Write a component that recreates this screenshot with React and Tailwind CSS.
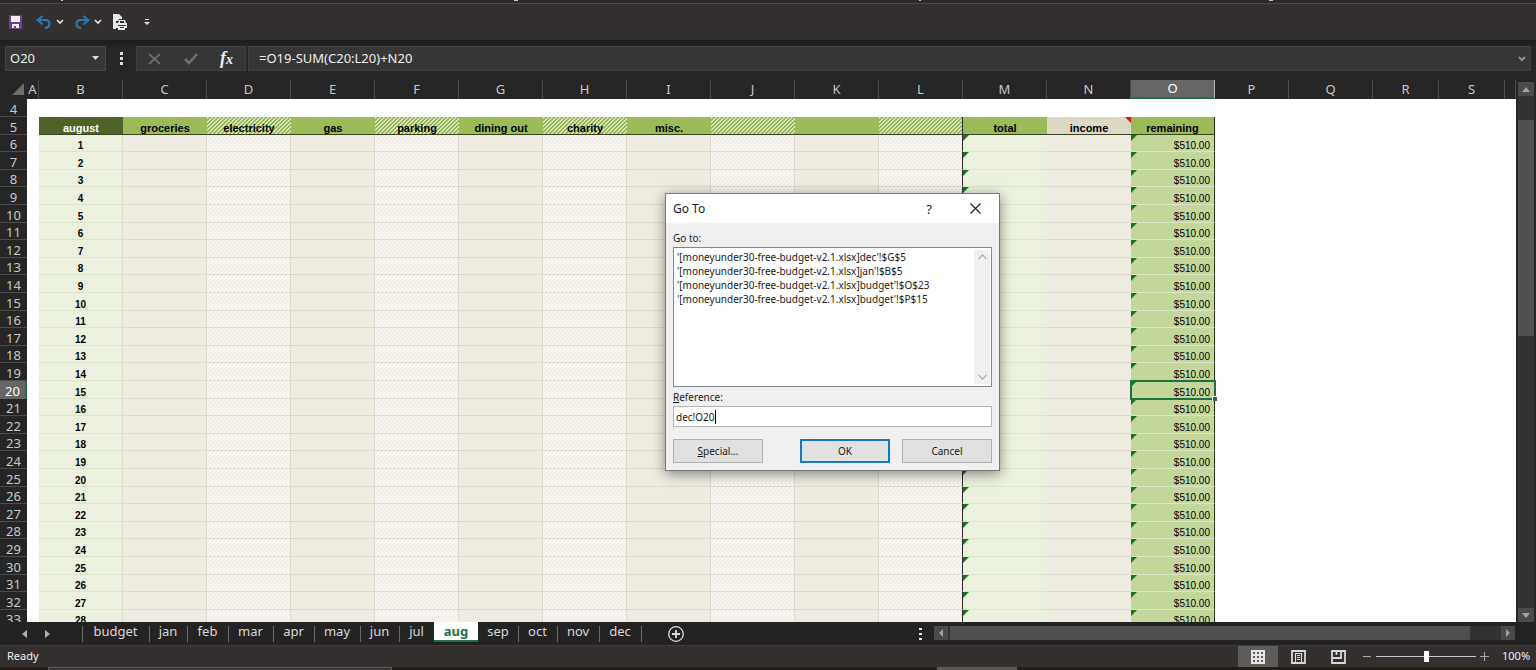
import React from "react";

const MONTHS = ["budget", "jan", "feb", "mar", "apr", "may", "jun", "jul", "aug", "sep", "oct", "nov", "dec"];

const TAB_WIDTHS = {
  budget: "w-[67px]",
  jan: "w-[38px]",
  feb: "w-[41px]",
  mar: "w-[45px]",
  apr: "w-[41px]",
  may: "w-[46px]",
  jun: "w-[39px]",
  jul: "w-[35px]",
  aug: "w-[44px]",
  sep: "w-[40px]",
  oct: "w-[39px]",
  nov: "w-[42px]",
  dec: "w-[42px]",
};

const PLAIN = "bg-[#eeebe0]";
const HATCH =
  "bg-[linear-gradient(135deg,#faf9f5_0_25%,#efece3_25%_50%,#faf9f5_50%_75%,#efece3_75%)] bg-[length:4px_4px]";
const HEAD = "bg-[#9bbb59]";
const HEAD_HATCH =
  "bg-[linear-gradient(135deg,#d9e5bf_0_25%,#93b54c_25%_50%,#d9e5bf_50%_75%,#93b54c_75%)] bg-[length:4px_4px]";

const COLUMNS = [
  { id: "A", width: "w-[12px]" },
  { id: "B", width: "w-[84px]", title: "august", head: "bg-[#4f6228] text-white", body: "bg-[#ebf1de]" },
  { id: "C", width: "w-[84px]", title: "groceries", head: HEAD, body: PLAIN },
  { id: "D", width: "w-[84px]", title: "electricity", head: HEAD_HATCH, body: HATCH },
  { id: "E", width: "w-[84px]", title: "gas", head: HEAD, body: PLAIN },
  { id: "F", width: "w-[84px]", title: "parking", head: HEAD_HATCH, body: HATCH },
  { id: "G", width: "w-[84px]", title: "dining out", head: HEAD, body: PLAIN },
  { id: "H", width: "w-[84px]", title: "charity", head: HEAD_HATCH, body: HATCH },
  { id: "I", width: "w-[84px]", title: "misc.", head: HEAD, body: PLAIN },
  { id: "J", width: "w-[84px]", title: "", head: HEAD_HATCH, body: HATCH },
  { id: "K", width: "w-[84px]", title: "", head: HEAD, body: PLAIN },
  { id: "L", width: "w-[84px]", title: "", head: HEAD_HATCH, body: HATCH },
  { id: "M", width: "w-[84px]", title: "total", head: HEAD, body: "bg-[#ebf1de]" },
  { id: "N", width: "w-[84px]", title: "income", head: "bg-[#ddd9c4]", body: PLAIN },
  { id: "O", width: "w-[84px]", title: "remaining", head: HEAD, body: "bg-[#c4d79b]" },
  { id: "P", width: "w-[74px]" },
  { id: "Q", width: "w-[84px]" },
  { id: "R", width: "w-[66px]" },
  { id: "S", width: "w-[66px]" },
  { id: "", width: "w-auto" },
];

const ROWS = Array.from({ length: 30 }, (_, i) => i + 4);
const ROW_HEIGHTS = ["h-[17px]", "h-[18px]", "h-[17px]", "h-[18px]", "h-[18px]"];
const rowHeight = (row) => (row < 6 ? "h-[18px]" : ROW_HEIGHTS[(row - 6) % 5]);

function ErrorMark() {
  return (
    <svg className="absolute top-0 left-0" width="6" height="6" aria-hidden="true">
      <path d="M0 0H6L0 6Z" fill="#107c10" />
    </svg>
  );
}

function Cell({ row, col }) {
  if (!col.body || row === 4) return <td className="bg-white" />;
  const edge =
    col.id === "O" ? "border-r border-r-[#2b3318]" : col.id === "L" ? "border-r border-r-[#2b2b2b]" : "";
  if (row === 5) {
    return (
      <td className={`relative border-b border-b-[#3a4420] text-center font-bold ${edge} ${col.head}`}>
        <div className="flex h-[17px] items-end justify-center leading-[11px]">{col.title}</div>
        {col.id === "N" && (
          <svg className="absolute top-0 right-0" width="6" height="6" aria-hidden="true">
            <path d="M0 0H6V6Z" fill="#d21414" />
          </svg>
        )}
      </td>
    );
  }
  const line =
    col.id === "B" || col.id === "M" || col.id === "O"
      ? "border-b border-b-[#dbe3c9]"
      : "border-b border-b-[#dcd9cf]";
  const side = edge || (col.id === "M" || col.id === "N" ? "" : "border-r border-r-[#dcd9cf]");
  return (
    <td className={`relative text-[10px] ${line} ${side} ${col.body}`}>
      {col.id === "B" && <div className="h-4 text-center leading-[21px] font-bold">{row - 5}</div>}
      {col.id === "O" && <div className="h-4 pr-1 text-right leading-[21px]">$510.00</div>}
      {(col.id === "M" || col.id === "O") && <ErrorMark />}
      {col.id === "O" && row === 20 && (
        <div className="absolute -top-px -right-[2px] -bottom-[2px] -left-px z-10 border-2 border-[#1e7145]">
          <div className="absolute -right-[3px] -bottom-[3px] size-[5px] border-t border-l border-white bg-[#1e7145]" />
        </div>
      )}
    </td>
  );
}

function Sheet() {
  return (
    <table className="w-full table-fixed border-separate border-spacing-0 font-['Liberation_Sans',sans-serif] text-[11px] text-black">
      <colgroup>
        <col className="w-[27px]" />
        {COLUMNS.map((c, i) => (
          <col key={i} className={c.width} />
        ))}
      </colgroup>
      <thead>
        <tr className="h-[19px] bg-[#262626] font-['Noto_Sans',sans-serif] text-[13px] leading-[17px] text-[#c8c8c8]">
          <th className="p-0">
            <svg className="ml-3" width="13" height="13" aria-label="Select all">
              <path d="M12 0V12H0Z" fill="#6e6e6e" />
            </svg>
          </th>
          {COLUMNS.map((c, i) => (
            <th
              key={i}
              className={
                c.id === "O"
                  ? "border-r border-b-2 border-r-[#bdbdbd] border-b-[#1e7145] bg-[#666666] p-0 font-normal text-white"
                  : "border-r border-r-[#4c4c4c] p-0 font-normal"
              }
            >
              {c.id}
            </th>
          ))}
        </tr>
      </thead>
      <tbody>
        {ROWS.map((row) => (
          <tr key={row} className={rowHeight(row)}>
            <th
              className={
                row === 20
                  ? "border-r-2 border-r-[#1e7145] bg-[#666666] p-0 font-['Noto_Sans',sans-serif] text-[13px] font-normal text-white"
                  : "border-b border-b-[#4c4c4c] bg-[#262626] p-0 font-['Noto_Sans',sans-serif] text-[13px] font-normal text-[#c8c8c8]"
              }
            >
              <div className="h-4 leading-[19px]">{row}</div>
            </th>
            {COLUMNS.map((c, i) => (
              <Cell key={i} row={row} col={c} />
            ))}
          </tr>
        ))}
      </tbody>
    </table>
  );
}

function Chevron() {
  return (
    <svg width="8" height="6" viewBox="0 0 8 6" fill="none" stroke="#e6e6e6" strokeWidth="1.600">
      <path d="M1 1 4 4 7 1" />
    </svg>
  );
}

function QuickAccess() {
  return (
    <header className="flex h-[37px] shrink-0 items-center border-t border-[#4a4a48] bg-[#34302f] pl-2">
      <button aria-label="Save" className="w-7">
        <svg width="14" height="14" viewBox="0 0 14 14">
          <path d="M1 0H14V14H2L1 13Z" fill="#6b3f96" />
          <path d="M3 1H12V7H3Z" fill="#f5f0fa" />
          <path d="M4 9H11V13H4Z" fill="#f5f0fa" />
          <path d="M6 11H8V13H6Z" fill="#6b3f96" />
        </svg>
      </button>
      <button aria-label="Undo" className="flex w-[38px] items-center gap-1">
        <svg width="16" height="14" viewBox="0 0 16 14" fill="none" stroke="#2e75b6" strokeWidth="2.200">
          <path d="M6.500 1 1.800 5 6.500 9.500" />
          <path d="M2 5H9C15 5 15 12 9 13" />
        </svg>
        <Chevron />
      </button>
      <button aria-label="Redo" className="flex w-[38px] items-center gap-1">
        <svg width="16" height="14" viewBox="0 0 16 14" fill="none" stroke="#2e75b6" strokeWidth="2.200">
          <path d="M9.500 1 14.200 5 9.500 9.500" />
          <path d="M14 5H7C1 5 1 12 7 13" />
        </svg>
        <Chevron />
      </button>
      <button aria-label="Print preview" className="w-8">
        <svg width="17" height="17" viewBox="0 0 17 17">
          <path d="M1 0H7L10 3V5H7L6 7H4V15H1Z" fill="#e8e8e8" />
          <path d="M7 6H13L14 9H15V14H13V16H6V14H4V9H6Z" fill="#e8e8e8" />
          <path d="M8 7H12V9H8ZM6 11H14V12H6ZM8 13H12V14H8Z" fill="#34302f" />
        </svg>
      </button>
      <button aria-label="Customize toolbar">
        <svg width="6" height="7" viewBox="0 0 6 7" fill="#dcdcdc">
          <path d="M1 0H5V1H1ZM0 3H6L3 6Z" />
        </svg>
      </button>
    </header>
  );
}

function FormulaBar() {
  return (
    <section className="flex h-[40px] shrink-0 items-start bg-gradient-to-b from-[#1c1c1c] to-[#262626] to-20% pt-[6px] pr-[5px] pl-[5px] text-[13px] text-[#efefef]">
      <label className="flex h-[25px] w-[101px] items-center border border-[#444] bg-[#363636] pr-[6px]">
        <input aria-label="Name box" defaultValue="O20" className="w-0 flex-1 bg-transparent pl-1 outline-none" />
        <svg width="7" height="5" viewBox="0 0 7 5" fill="#dcdcdc">
          <path d="M0 0H7L3.500 4Z" />
        </svg>
      </label>
      <svg className="mt-[6px] ml-[14px]" width="3" height="13" fill="#dcdcdc">
        <path d="M0 0H3V3H0ZM0 5H3V8H0ZM0 10H3V13H0Z" />
      </svg>
      <div className="ml-[13px] flex h-[25px] w-[110px] items-center border border-[#404040] bg-[#363636]">
        <button aria-label="Cancel entry" className="ml-[11px] w-9">
          <svg width="13" height="12" viewBox="0 0 13 12" stroke="#6e6e6e" strokeWidth="1.700">
            <path d="M1 1 12 11M12 1 1 11" />
          </svg>
        </button>
        <button aria-label="Enter" className="w-9">
          <svg width="14" height="12" viewBox="0 0 14 12" fill="none" stroke="#6e6e6e" strokeWidth="2.600">
            <path d="M1 6 5 10 13 1" />
          </svg>
        </button>
        <button
          aria-label="Insert function"
          className="flex items-baseline font-['Liberation_Serif',serif] text-[18px] leading-5 font-bold italic"
        >
          f<span className="text-[14px]">x</span>
        </button>
      </div>
      <label className="ml-[2px] flex h-[25px] flex-1 items-center border border-[#404040] bg-[#363636] pr-1">
        <input
          aria-label="Formula"
          defaultValue="=O19-SUM(C20:L20)+N20"
          className="w-0 flex-1 bg-transparent pl-[10px] outline-none"
        />
        <svg width="8" height="6" viewBox="0 0 8 6" fill="none" stroke="#8a8a8a" strokeWidth="2">
          <path d="M1 1 4 4 7 1" />
        </svg>
      </label>
    </section>
  );
}

function Arrow({ d, label }) {
  return (
    <button aria-label={label} className="flex size-[14px] shrink-0 items-center justify-center bg-[#4a4a4a]">
      <svg width="8" height="8" viewBox="0 0 8 8" fill="#a0a0a0">
        <path d={d} />
      </svg>
    </button>
  );
}

function SheetTabs() {
  return (
    <nav className="flex h-[23px] shrink-0 items-start bg-[#232323] text-[13px] text-[#d8d8d8]">
      <div className="flex h-[23px] w-[82px] items-center gap-[18px] pl-[22px]">
        <button aria-label="Previous sheet">
          <svg width="5" height="8" fill="#b0b0b0">
            <path d="M5 0V8L0 4Z" />
          </svg>
        </button>
        <button aria-label="Next sheet">
          <svg width="5" height="8" fill="#b0b0b0">
            <path d="M0 0V8L5 4Z" />
          </svg>
        </button>
      </div>
      {MONTHS.map((m) =>
        m === "aug" ? (
          <button
            key={m}
            className={`${TAB_WIDTHS[m]} h-[20px] border-b-2 border-[#1e7145] bg-white leading-[18px] font-bold text-[#1e7145]`}
          >
            {m}
          </button>
        ) : (
          <button key={m} className={`${TAB_WIDTHS[m]} flex h-[20px] items-end leading-[18px]`}>
            <span className={m === "sep" ? "h-4 w-px" : "h-4 w-px bg-[#6a6a6a]"} />
            <span className="flex-1 self-start pr-px">{m}</span>
          </button>
        ),
      )}
      <span className="mt-1 h-4 w-px bg-[#6a6a6a]" />
      <button aria-label="New sheet" className="mt-1 ml-[26px]">
        <svg width="16" height="16" viewBox="0 0 16 16" fill="none" stroke="#dcdcdc">
          <circle cx="8" cy="8" r="7.300" strokeWidth="1.300" />
          <path d="M8 4V12M4 8H12" strokeWidth="1.800" />
        </svg>
      </button>
      <svg className="mt-[6px] mr-3 ml-auto" width="3" height="12" fill="#e8e8e8">
        <path d="M0 0H3V2H0ZM0 5H3V7H0ZM0 10H3V12H0Z" />
      </svg>
      <div className="mt-1 mr-[21px] flex w-[581px] gap-[2px] bg-[#333]">
        <Arrow label="Scroll left" d="M6 0V8L2 4Z" />
        <div className="h-[14px] w-[520px] bg-[#505050]" />
        <div className="flex-1" />
        <Arrow label="Scroll right" d="M2 0V8L6 4Z" />
      </div>
    </nav>
  );
}

function StatusBar() {
  return (
    <footer className="flex h-[22px] shrink-0 items-center border-t border-[#3c3c3c] bg-[#34302f] text-[11px] text-[#efefef]">
      <span className="pl-[7px]">Ready</span>
      <button aria-label="Normal view" className="ml-auto flex h-[21px] w-10 items-center justify-center bg-[#5e5c5b]">
        <svg width="14" height="14" viewBox="0 0 14 14">
          <path d="M0 0H14V14H0Z" fill="#e4e4e4" />
          <path
            d="M2 2H4V4H2ZM6 2H8V4H6ZM10 2H12V4H10ZM2 6H4V8H2ZM6 6H8V8H6ZM10 6H12V8H10ZM2 10H4V12H2ZM6 10H8V12H6ZM10 10H12V12H10Z"
            fill="#5e5c5b"
          />
        </svg>
      </button>
      <button aria-label="Page layout view" className="flex w-10 items-center justify-center">
        <svg width="15" height="14" viewBox="0 0 15 14" fill="none" stroke="#d8d8d8">
          <path d="M1 1H14V13H1Z" strokeWidth="1.800" />
          <path d="M4.500 12V3.500H10.500V12M6 5.500H9M6 7.500H9M6 9.500H9" strokeWidth="1.200" />
        </svg>
      </button>
      <button aria-label="Page break preview" className="flex w-10 items-center justify-center">
        <svg width="15" height="14" viewBox="0 0 15 14" fill="none" stroke="#d8d8d8" strokeWidth="1.800">
          <path d="M1 1H14V13H1ZM5.500 1V5M1 8H10V1" />
        </svg>
      </button>
      <button aria-label="Zoom out" className="ml-[5px] flex w-[13px] justify-start">
        <svg width="8" height="9" stroke="#a8a8a8">
          <path d="M0 4.500H8" />
        </svg>
      </button>
      <label className="flex w-[100px] shrink-0 items-center">
        <input
          type="range"
          aria-label="Zoom"
          min="0"
          max="100"
          defaultValue="50"
          className="h-[12px] w-full appearance-none bg-[linear-gradient(#c8c8c8,#c8c8c8)] bg-[length:100%_1px] bg-center bg-no-repeat [&::-webkit-slider-thumb]:h-[11px] [&::-webkit-slider-thumb]:w-[5px] [&::-webkit-slider-thumb]:appearance-none [&::-webkit-slider-thumb]:bg-white"
        />
      </label>
      <button aria-label="Zoom in" className="ml-1 flex">
        <svg width="9" height="9" stroke="#a8a8a8">
          <path d="M0 4.500H9M4.500 0V9" />
        </svg>
      </button>
      <span className="w-[47px] pl-[13px]">100%</span>
    </footer>
  );
}

function GoToDialog() {
  const entries = [
    "'[moneyunder30-free-budget-v2.1.xlsx]dec'!$G$5",
    "'[moneyunder30-free-budget-v2.1.xlsx]jan'!$B$5",
    "'[moneyunder30-free-budget-v2.1.xlsx]budget'!$O$23",
    "'[moneyunder30-free-budget-v2.1.xlsx]budget'!$P$15",
  ];
  return (
    <div
      role="dialog"
      aria-label="Go To"
      className="absolute top-[193px] left-[665px] z-20 w-[335px] border border-[#777] bg-[#f0f0f0] text-[10px] leading-[14px] text-[#1a1a1a] shadow-[0_3px_12px_rgba(0,0,0,0.45)]"
    >
      <div className="flex h-[29px] items-center bg-white pl-[7px]">
        <h2 className="flex-1 text-[12px]">Go To</h2>
        <button aria-label="Help" className="w-11 text-[13px]">
          ?
        </button>
        <button aria-label="Close" className="flex w-12 justify-center">
          <svg width="11" height="11" stroke="#222" strokeWidth="1.200">
            <path d="M.5 .5 10.500 10.500M10.500 .5 .5 10.500" />
          </svg>
        </button>
      </div>
      <div className="px-[7px] pt-2 pb-[7px]">
        <div id="goto-label">Go to:</div>
        <div className="mt-[2px] flex h-[140px] border border-[#828790] bg-white">
          <ul aria-labelledby="goto-label" className="flex-1 pt-[2px] pl-[3px]">
            {entries.map((e) => (
              <li key={e}>{e}</li>
            ))}
          </ul>
          <div className="my-[2px] mr-px flex w-[16px] flex-col items-center justify-between bg-[#f0f0f0] py-1">
            <svg width="9" height="6" fill="none" stroke="#b4b4b4" strokeWidth="1.500">
              <path d="M.5 5 4.500 1 8.500 5" />
            </svg>
            <svg width="9" height="6" fill="none" stroke="#b4b4b4" strokeWidth="1.500">
              <path d="M.5 1 4.500 5 8.500 1" />
            </svg>
          </div>
        </div>
        <label htmlFor="reference" className="mt-[3px] block">
          <span className="underline">R</span>eference:
        </label>
        <div className="mt-[2px] flex h-[21px] items-center border border-[#b4b4b4] bg-white pl-[2px]">
          <input
            id="reference"
            defaultValue="dec!O20"
            className="field-sizing-content border-r border-black outline-none"
          />
        </div>
        <div className="mt-[12px] flex h-[24px]">
          <button className="w-[90px] border border-[#b0b0b0] bg-[#e1e1e1]">
            <span className="underline">S</span>pecial...
          </button>
          <button className="ml-auto w-[90px] border-2 border-[#1a78b8] bg-[#e1e1e1]">OK</button>
          <button className="ml-3 w-[90px] border border-[#b0b0b0] bg-[#e1e1e1]">Cancel</button>
        </div>
      </div>
    </div>
  );
}

export default function App() {
  return (
    <div className="relative flex h-screen flex-col overflow-hidden bg-[#262626] font-['Noto_Sans',sans-serif]">
      <div className="flex h-[3px] shrink-0 bg-[#2c2b2a]">
        <span className="ml-[61px] h-px w-[2px] bg-[#c0c0c0]" />
        <span className="ml-[451px] h-px w-1 bg-[#c0c0c0]" />
        <span className="ml-[401px] h-px w-[2px] bg-[#c0c0c0]" />
        <span className="ml-[348px] h-px w-1 bg-[#c0c0c0]" />
      </div>
      <QuickAccess />
      <FormulaBar />
      <main className="flex min-h-0 flex-1">
        <div className="min-w-0 flex-1 overflow-hidden">
          <Sheet />
        </div>
        <aside className="mx-[2px] mt-[2px] flex w-[16px] flex-col items-stretch bg-[#333]">
          <button aria-label="Scroll up" className="flex h-[14px] items-center justify-center bg-[#4a4a4a]">
            <svg width="8" height="5" fill="#a0a0a0">
              <path d="M0 5H8L4 0Z" />
            </svg>
          </button>
          <div className="mt-6 h-[216px] bg-[#505050]" />
          <button aria-label="Scroll down" className="mt-auto flex h-[14px] items-center justify-center bg-[#4a4a4a]">
            <svg width="8" height="5" fill="#a0a0a0">
              <path d="M0 0H8L4 5Z" />
            </svg>
          </button>
        </aside>
      </main>
      <SheetTabs />
      <StatusBar />
      <div className="flex h-[3px] shrink-0 bg-[#241f18]">
        <div className="ml-12 w-[344px] border border-b-0 border-[#5a5a58] bg-[#333]" />
        <div className="ml-[545px] w-[80px] bg-[#5c5854]" />
      </div>
      <GoToDialog />
    </div>
  );
}
